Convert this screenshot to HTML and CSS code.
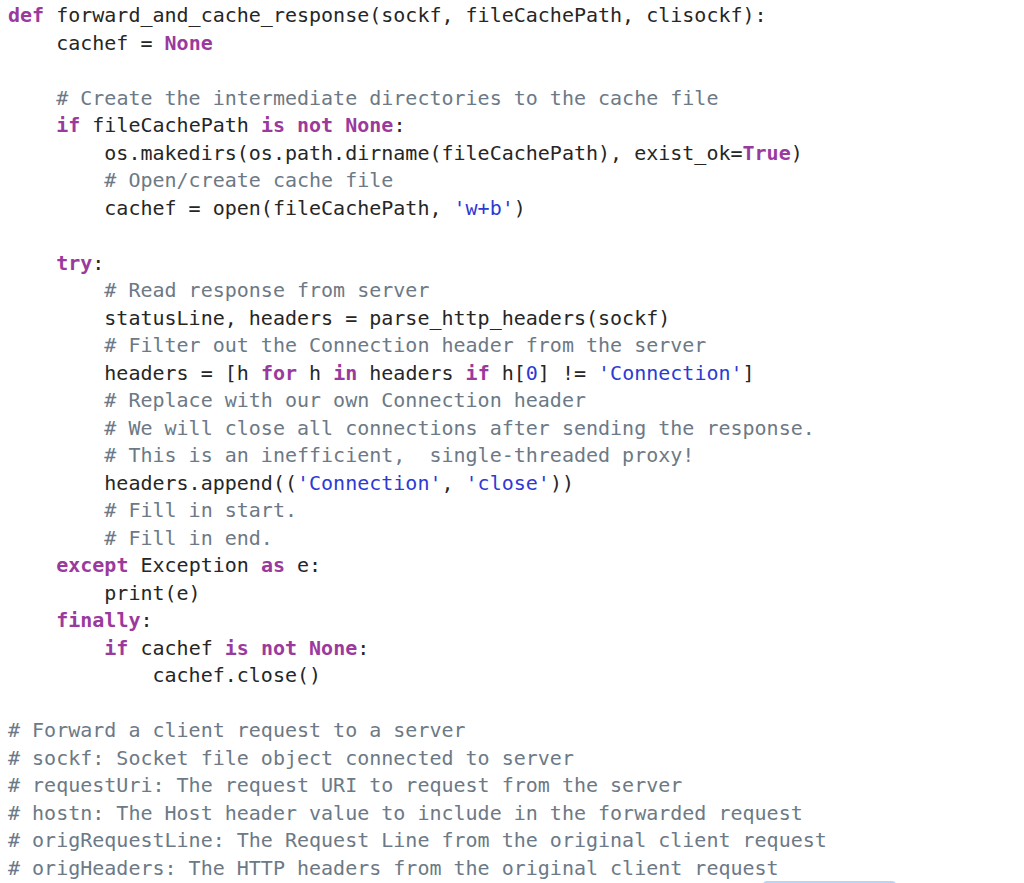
FILE: index.html
```html
<!DOCTYPE html>
<html>
<head>
<meta charset="utf-8">
<link rel="stylesheet" href="styles.css">
</head>
<body>
<pre class="code"><span class="kw">def</span> forward_and_cache_response(sockf, fileCachePath, clisockf):
    cachef = <span class="kw">None</span>

    <span class="cm"># Create the intermediate directories to the cache file</span>
    <span class="kw">if</span> fileCachePath <span class="kw">is</span> <span class="kw">not</span> <span class="kw">None</span>:
        os.makedirs(os.path.dirname(fileCachePath), exist_ok=<span class="kw">True</span>)
        <span class="cm"># Open/create cache file</span>
        cachef = open(fileCachePath, <span class="st">'w+b'</span>)

    <span class="kw">try</span>:
        <span class="cm"># Read response from server</span>
        statusLine, headers = parse_http_headers(sockf)
        <span class="cm"># Filter out the Connection header from the server</span>
        headers = [h <span class="kw">for</span> h <span class="kw">in</span> headers <span class="kw">if</span> h[<span class="st">0</span>] != <span class="st">'Connection'</span>]
        <span class="cm"># Replace with our own Connection header</span>
        <span class="cm"># We will close all connections after sending the response.</span>
        <span class="cm"># This is an inefficient,  single-threaded proxy!</span>
        headers.append((<span class="st">'Connection'</span>, <span class="st">'close'</span>))
        <span class="cm"># Fill in start.</span>
        <span class="cm"># Fill in end.</span>
    <span class="kw">except</span> Exception <span class="kw">as</span> e:
        print(e)
    <span class="kw">finally</span>:
        <span class="kw">if</span> cachef <span class="kw">is</span> <span class="kw">not</span> <span class="kw">None</span>:
            cachef.close()

<span class="cm"># Forward a client request to a server</span>
<span class="cm"># sockf: Socket file object connected to server</span>
<span class="cm"># requestUri: The request URI to request from the server</span>
<span class="cm"># hostn: The Host header value to include in the forwarded request</span>
<span class="cm"># origRequestLine: The Request Line from the original client request</span>
<span class="cm"># origHeaders: The HTTP headers from the original client request</span></pre>
<div class="peek"></div>
</body>
</html>
```

FILE: styles.css
```css
html, body {
  margin: 0;
  padding: 0;
  background: #ffffff;
  height: 883px;
  overflow: hidden;
}
body {
  position: relative;
}
.code {
  margin: 0;
  padding: 2px 0 0 8px;
  font-family: "DejaVu Sans Mono", "Liberation Mono", monospace;
  font-size: 20px;
  line-height: 27.5px;
  color: #262626;
  white-space: pre;
}
.kw {
  color: #9b3a9d;
  font-weight: bold;
}
.cm {
  color: #6c7986;
}
.st {
  color: #2c3ad3;
}
.peek {
  position: absolute;
  left: 763px;
  top: 881px;
  width: 133px;
  height: 8px;
  background: #b9d4f6;
  border-radius: 4px;
}
```
